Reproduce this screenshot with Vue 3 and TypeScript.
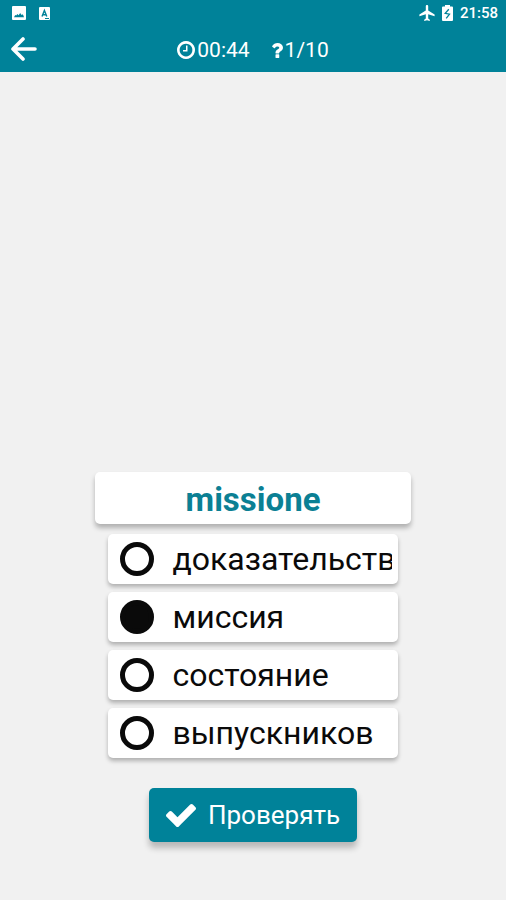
<script setup lang="ts">
import { ref } from 'vue'

interface Option {
  id: string
  text: string
}

const word = 'missione'
const options: Option[] = [
  { id: 'evidence', text: 'доказательств' },
  { id: 'mission', text: 'миссия' },
  { id: 'state', text: 'состояние' },
  { id: 'graduates', text: 'выпускников' },
]
const selected = ref<string>('mission')
</script>

<template>
  <div class="app">
    <header class="top">
      <div class="status">
        <div class="status-group notices">
          <svg class="picture-icon" viewBox="0 0 14 14" aria-hidden="true">
            <path fill="#fff" fill-rule="evenodd" d="M1 0h12q1 0 1 1v12q0 1-1 1h-12q-1 0-1-1v-12q0-1 1-1zM2 11.300h10l-.8-2.300-1-.8-.8.8-1.200-2-1.600 2.300-1.200-1.300-1.200 1.600-1-.6z" />
          </svg>
          <svg class="letter-icon" viewBox="0 0 11 13" aria-hidden="true">
            <rect width="11" height="13" rx="1" fill="#fff" />
            <path d="M3 9.500 5.400 3.500 7.800 9.500M4 7.700h2.800" fill="none" stroke="#008299" stroke-width="1.400" />
            <path d="M6 11.500h4" stroke="#008299" stroke-width="1" />
          </svg>
        </div>
        <div class="status-group">
          <svg class="plane-icon" viewBox="2 2 19 20" aria-hidden="true">
            <path fill="#fff" d="M21 16v-2l-8-5V3.500C13 2.670 12.330 2 11.500 2S10 2.670 10 3.500V9l-8 5v2l8-2.500V19l-2 1.500V22l3.500-1 3.500 1v-1.500L13 19v-5.500z" />
          </svg>
          <svg class="battery-icon" viewBox="0 0 11 16" aria-hidden="true">
            <path fill="#fff" d="M3 0h5v1.500h2q1 0 1 1v12.500q0 1-1 1h-9q-1 0-1-1v-12.500q0-1 1-1h2z" />
            <path d="M6.800 4.200 3.200 8.300l4.300.9-3.300 4.200" fill="none" stroke="#008299" stroke-width="1.300" />
          </svg>
          <span class="time">21:58</span>
        </div>
      </div>
      <nav class="bar">
        <button class="back" type="button" aria-label="Назад">
          <svg viewBox="0 0 26 24" aria-hidden="true">
            <path d="M12 2 2 12l10 10M3 12h21" fill="none" stroke="#fff" stroke-width="3.600" stroke-linecap="round" stroke-linejoin="round" />
          </svg>
        </button>
        <div class="stats">
          <span class="stat">
            <svg class="clock-icon" viewBox="128 128 1536 1536" aria-hidden="true">
              <path fill="#fff" d="M1024 544v448q0 14-9 23t-23 9h-320q-14 0-23-9t-9-23v-64q0-14 9-23t23-9h224v-352q0-14 9-23t23-9h64q14 0 23 9t9 23zm416 352q0-148-73-273t-198-198-273-73-273 73-198 198-73 273 73 273 198 198 273 73 273-73 198-198 73-273zm224 0q0 209-103 385.500t-279.500 279.500-385.500 103-385.500-103-279.500-279.500-103-385.500 103-385.500 279.500-279.500 385.500-103 385.500 103 279.500 279.500 103 385.500z" />
            </svg>
            <span>00:44</span>
          </span>
          <span class="stat">
            <svg class="question-icon" viewBox="387 256 1017 1280" aria-hidden="true">
              <path fill="#fff" d="M1088 1256v240q0 16-12 28t-28 12h-240q-16 0-28-12t-12-28v-240q0-16 12-28t28-12h240q16 0 28 12t12 28zm316-600q0 54-15.500 101t-35 76.500-55 59.500-57.500 43.500-61 35.500q-41 23-68.500 65t-27.500 67q0 17-12 32.500t-28 15.500h-240q-15 0-25.500-18.500t-10.500-37.500v-45q0-83 65-156.500t143-108.500q59-27 84-56t25-76q0-42-46.500-74t-107.500-32q-65 0-108 29-35 25-107 115-13 16-31 16-12 0-25-8l-164-125q-13-10-15.500-25t5.500-28q160-266 464-266 80 0 161 31t146 83 106 127.500 41 158.500z" />
            </svg>
            <span>1/10</span>
          </span>
        </div>
      </nav>
    </header>

    <main class="quiz">
      <h1 id="word" class="word">{{ word }}</h1>
      <div class="options" role="radiogroup" aria-labelledby="word">
        <label v-for="option in options" :key="option.id" class="option" :for="option.id">
          <input :id="option.id" v-model="selected" class="radio" type="radio" name="answer" :value="option.id" />
          <span class="option-text">{{ option.text }}</span>
        </label>
      </div>
      <button class="check" type="button">
        <svg viewBox="121 334 1550 1188" aria-hidden="true">
          <path fill="#fff" d="M1671 566q0 40-28 68l-724 724-136 136q-28 28-68 28t-68-28l-136-136-362-362q-28-28-28-68t28-68l136-136q28-28 68-28t68 28l294 295 656-657q28-28 68-28t68 28l136 136q28 28 28 68z" />
        </svg>
        <span>Проверять</span>
      </button>
    </main>
  </div>
</template>

<style>
body {
  background: #f1f1f1;
}
</style>

<style scoped>
.app {
  display: flex;
  flex-direction: column;
  min-height: 100vh;
  background: #f1f1f1;
  font-family: Roboto, "Noto Sans", sans-serif;
}

.app *,
.app {
  box-sizing: border-box;
}

svg {
  display: block;
  flex: none;
}

.top {
  background: #008299;
  color: #fff;
}

.status {
  display: flex;
  align-items: center;
  justify-content: space-between;
  height: 26px;
  padding: 0 8px 0 12px;
}

.status-group {
  display: flex;
  align-items: center;
  gap: 7px;
}

.notices {
  gap: 13px;
}

.picture-icon {
  width: 14px;
  height: 14px;
}

.letter-icon {
  width: 11px;
  height: 13px;
}

.plane-icon {
  width: 16px;
  height: 16px;
}

.battery-icon {
  width: 11px;
  height: 16px;
}

.time {
  font-size: 15px;
  font-weight: 500;
  line-height: 20px;
}

.bar {
  display: grid;
  grid-template-columns: 1fr auto 1fr;
  align-items: center;
  height: 46px;
  padding: 0 11px;
}

.back {
  justify-self: start;
  padding: 0;
  border: 0;
  background: none;
  cursor: pointer;
}

.back svg {
  width: 26px;
  height: 24px;
}

.stats {
  display: flex;
  gap: 21px;
  padding-top: 2px;
  font-size: 21px;
  line-height: 26px;
}

.stat {
  display: flex;
  align-items: center;
  gap: 2px;
}

.clock-icon {
  width: 18px;
  height: 18px;
}

.question-icon {
  width: 12px;
  height: 15px;
}

.quiz {
  display: flex;
  flex: 1;
  flex-direction: column;
  align-items: center;
  justify-content: flex-end;
  padding: 16px 16px 58px;
}

.word {
  width: 63%;
  min-width: 316px;
  margin: 0;
  padding: 8px 8px 4px;
  border-radius: 5px;
  background: #fff;
  box-shadow: 0 4px 5px rgba(0, 0, 0, 0.27);
  color: #0b8094;
  font-size: 33px;
  font-weight: 700;
  line-height: 40px;
  text-align: center;
}

.options {
  display: flex;
  flex-direction: column;
  gap: 8px;
  width: 61%;
  margin: 10px 0 30px;
}

.option {
  display: flex;
  align-items: center;
  gap: 18px;
  height: 50px;
  padding: 0 6px 0 12px;
  border-radius: 5px;
  background: #fff;
  box-shadow: 0 3px 4px rgba(0, 0, 0, 0.27);
  cursor: pointer;
}

.radio {
  flex: none;
  width: 34px;
  height: 34px;
  margin: 0;
  border: 5px solid #0a0a0a;
  border-radius: 50%;
  appearance: none;
  background: #fff;
  cursor: pointer;
}

.radio:checked {
  background: #0a0a0a;
}

.option-text {
  flex: 1;
  min-width: 0;
  overflow: hidden;
  color: #0a0a0a;
  font-size: 32px;
  line-height: 44px;
  white-space: nowrap;
}

.check {
  display: flex;
  align-items: center;
  gap: 12px;
  height: 54px;
  padding: 0 17px;
  border: 0;
  border-radius: 5px;
  background: #008299;
  box-shadow: 0 6px 6px rgba(0, 0, 0, 0.24);
  color: #fff;
  font-family: inherit;
  font-size: 26px;
  line-height: 36px;
  cursor: pointer;
}

.check svg {
  width: 30px;
  height: 23px;
}
</style>
